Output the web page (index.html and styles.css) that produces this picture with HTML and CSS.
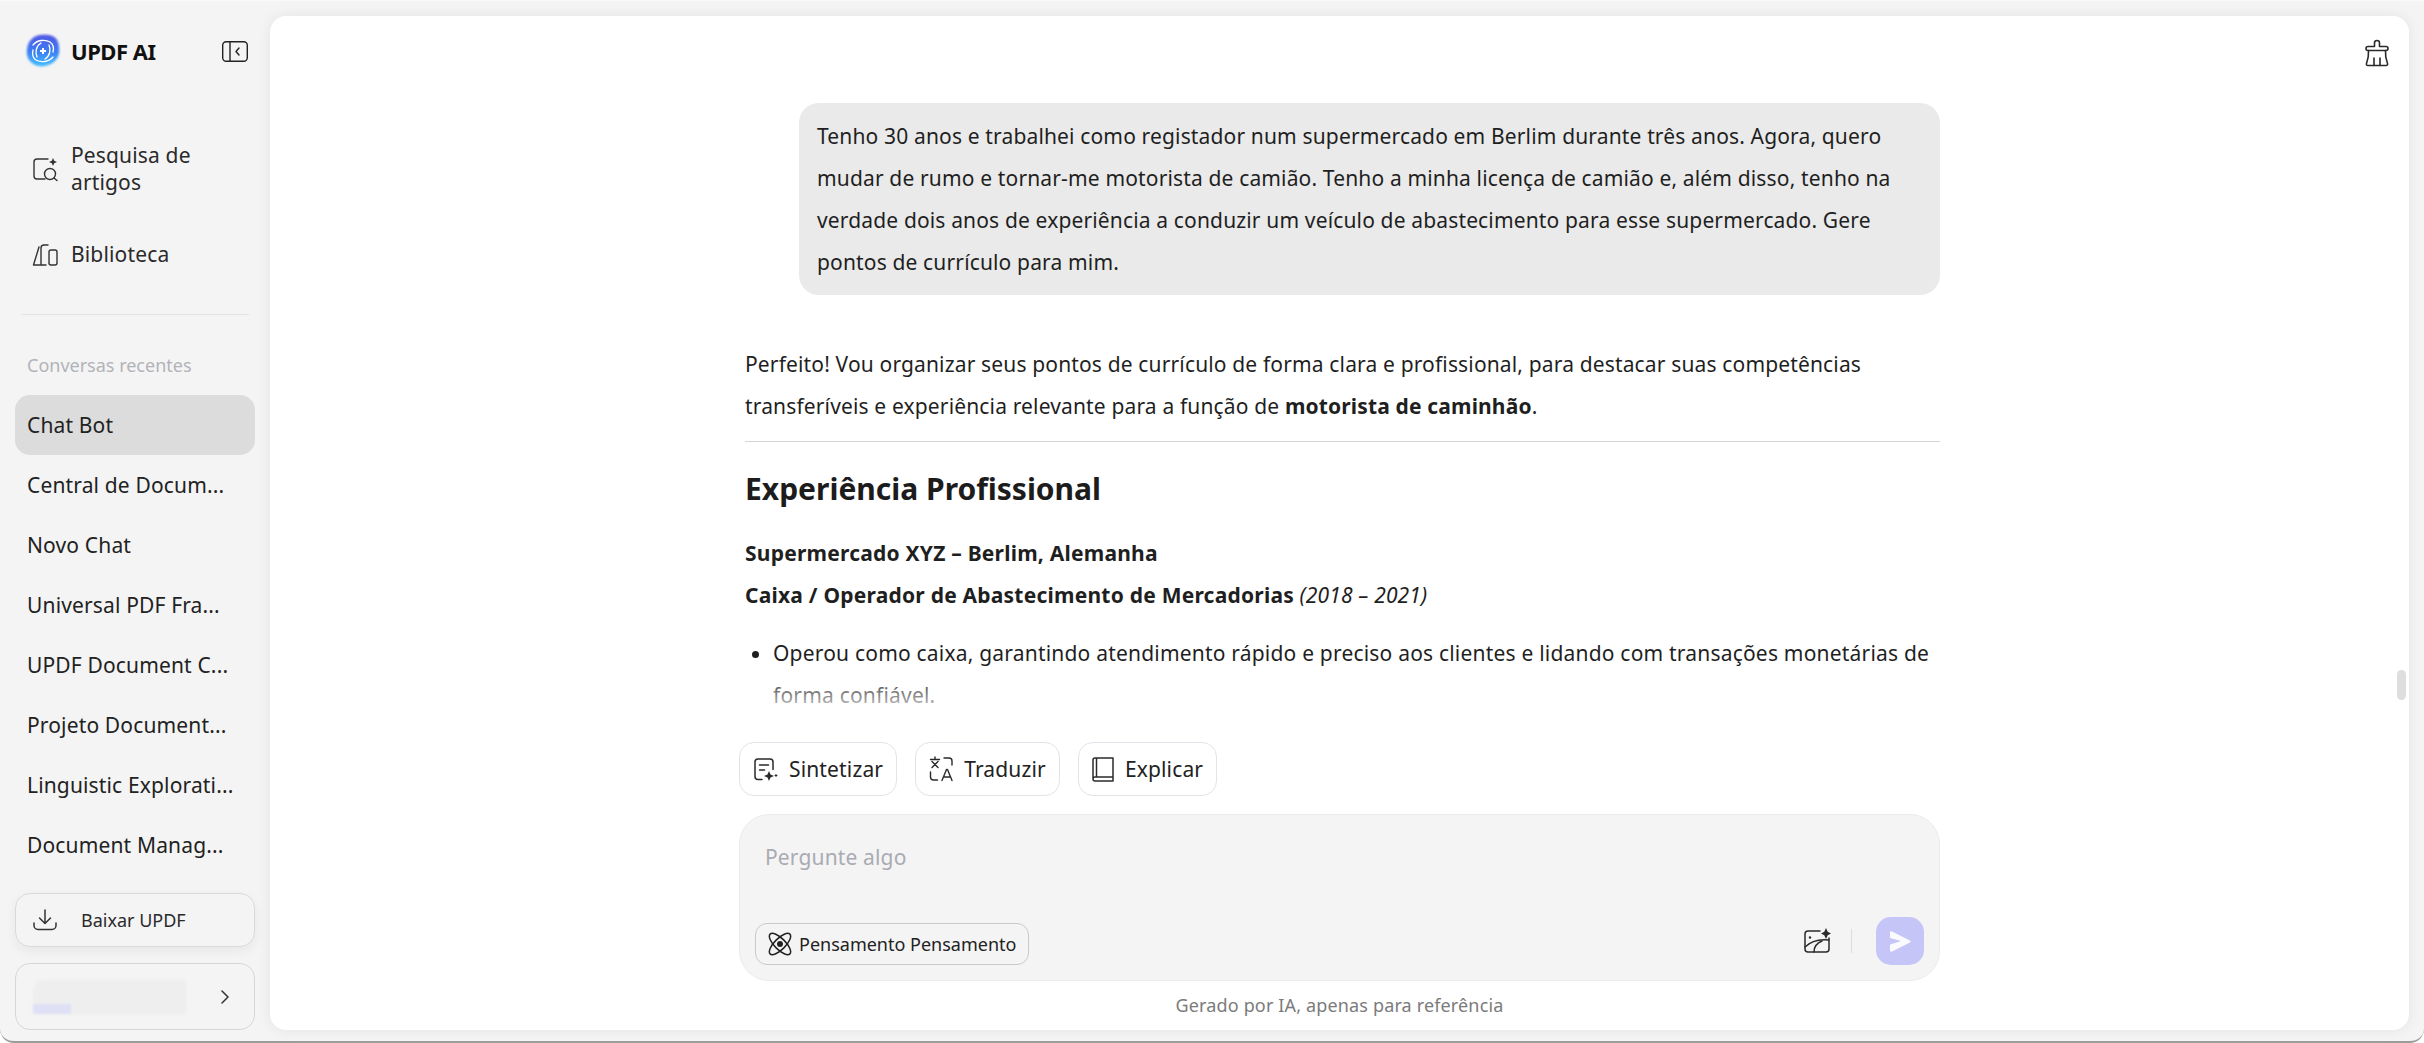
FILE: index.html
```html
<!DOCTYPE html>
<html lang="pt">
<head>
    <meta charset="UTF-8">
    <meta name="viewport" content="width=device-width, initial-scale=1.0">
    <title>UPDF AI</title>
    <link rel="stylesheet" href="styles.css">
</head>
<body>
    <div class="window">
        <aside class="sidebar">
            <div class="brand">
                <svg class="logo" width="36" height="36" viewBox="0 0 36 36">
                    <defs>
                        <linearGradient id="logoFill" x1="0.5" y1="0" x2="0.5" y2="1">
                            <stop offset="0" stop-color="#5256e4"/>
                            <stop offset="0.55" stop-color="#3b80f4"/>
                            <stop offset="1" stop-color="#45c0fc"/>
                        </linearGradient>
                        <filter id="logoSoft" x="-20%" y="-20%" width="140%" height="140%">
                            <feGaussianBlur stdDeviation="1.200"/>
                        </filter>
                    </defs>
                    <path d="M15 2c7-1 16 0 18 7s2 14-3 19-14 7-20 4S1 24 2 16 8 3 15 2Z" fill="url(#logoFill)" filter="url(#logoSoft)"/>
                    <g fill="none" stroke="#fff" stroke-width="1.300" stroke-linecap="round">
                        <path d="M8 12c4-5 12-6 17-3 3 2 4 6 3 10"/>
                        <path d="M28 24c-4 5-12 6-17 3-3-2-4-6-3-10"/>
                        <path d="M12 24c-2-5-1-11 4-14"/>
                        <path d="M24 12c2 5 1 11-4 14"/>
                    </g>
                    <path d="M18 15v6M15 18h6" stroke="#fff" stroke-width="2"/>
                </svg>
                <span class="brand-name">UPDF AI</span>
                <svg class="collapse" width="26" height="21" viewBox="0 0 26 21" fill="none" stroke="#222" stroke-width="1.400">
                    <rect x="0.700" y="0.700" width="24.600" height="19.600" rx="3.500"/>
                    <path d="M8 1v19"/>
                    <path d="M17 7l-3 3.500 3 3.500" stroke-linecap="round" stroke-linejoin="round"/>
                </svg>
            </div>

            <nav class="nav">
                <div class="nav-item">
                    <svg width="26" height="26" viewBox="0 0 26 26" fill="none" stroke="#333" stroke-width="1.400" stroke-linecap="round">
                        <path d="M16 3H5a3 3 0 0 0-3 3v14a3 3 0 0 0 3 3h8"/>
                        <circle cx="18" cy="18" r="5.500"/>
                        <path d="M22 22l3 2.500"/>
                        <path d="M21 2l1.200 2.800L25 6l-2.800 1.200L21 10l-1.200-2.800L17 6l2.800-1.200z" fill="#333" stroke="none"/>
                    </svg>
                    <span>Pesquisa de artigos</span>
                </div>
                <div class="nav-item">
                    <svg width="26" height="24" viewBox="0 0 26 24" fill="none" stroke="#333" stroke-width="1.400" stroke-linejoin="round" stroke-linecap="round">
                        <path d="M7 4L1.500 22H8"/>
                        <path d="M9 22V5a3 3 0 0 1 3-3h4"/>
                        <rect x="17" y="7" width="8" height="15" rx="2"/>
                        <path d="M9 22h5"/>
                    </svg>
                    <span>Biblioteca</span>
                </div>
            </nav>

            <div class="side-rule"></div>
            <div class="side-label">Conversas recentes</div>

            <ul class="chat-list">
                <li class="chat-row active">Chat Bot</li>
                <li class="chat-row">Central de Docum...</li>
                <li class="chat-row">Novo Chat</li>
                <li class="chat-row">Universal PDF Fra...</li>
                <li class="chat-row">UPDF Document C...</li>
                <li class="chat-row">Projeto Document...</li>
                <li class="chat-row">Linguistic Explorati...</li>
                <li class="chat-row">Document Manag...</li>
            </ul>

            <div class="download">
                <svg width="24" height="22" viewBox="0 0 24 22" fill="none" stroke="#333" stroke-width="1.500" stroke-linecap="round" stroke-linejoin="round">
                    <path d="M12 1v13M6.500 9l5.500 5.500L17.500 9"/>
                    <path d="M1 14v2.500a4 4 0 0 0 4 4h14a4 4 0 0 0 4-4V14"/>
                </svg>
                <span>Baixar UPDF</span>
            </div>

            <div class="account">
                <div class="account-blur">
                    <div class="blur-top"></div>
                    <div class="blur-bottom">
                        <div class="blur-tint"></div>
                        <div class="blur-rest"></div>
                    </div>
                </div>
                <svg width="10" height="14" viewBox="0 0 10 14" fill="none" stroke="#333" stroke-width="1.500" stroke-linecap="round" stroke-linejoin="round">
                    <path d="M2 1l6 6-6 6"/>
                </svg>
            </div>
        </aside>

        <main class="panel">
            <svg class="clear" width="26" height="28" viewBox="0 0 26 28" fill="none" stroke="#2a2a2a" stroke-width="1.600" stroke-linejoin="round" stroke-linecap="round">
                <path d="M10.500 7.500V4a2.500 2.500 0 0 1 5 0v3.500H22a2 2 0 0 1 0 4H4a2 2 0 0 1 0-4z"/>
                <path d="M4.500 11.500c.3 5-.6 9.500-2 13 -.4 1 .2 2 1.300 2h18.400c1.100 0 1.700-1 1.300-2-1.400-3.500-2.300-8-2-13"/>
                <path d="M10 19v7.500M16 19v7.500"/>
            </svg>

            <div class="chat">
                <div class="thread">
                    <div class="bubble">Tenho 30 anos e trabalhei como registador num supermercado em Berlim durante três anos. Agora, quero<br>mudar de rumo e tornar-me motorista de camião. Tenho a minha licença de camião e, além disso, tenho na<br>verdade dois anos de experiência a conduzir um veículo de abastecimento para esse supermercado. Gere<br>pontos de currículo para mim.</div>

                    <p class="answer">Perfeito! Vou organizar seus pontos de currículo de forma clara e profissional, para destacar suas competências<br>transferíveis e experiência relevante para a função de <strong>motorista de caminhão</strong>.</p>
                    <hr class="answer-rule">
                    <h2>Experiência Profissional</h2>
                    <p class="job"><strong>Supermercado XYZ – Berlim, Alemanha</strong><br><strong>Caixa / Operador de Abastecimento de Mercadorias</strong> <em>(2018 – 2021)</em></p>
                    <ul class="duties">
                        <li>Operou como caixa, garantindo atendimento rápido e preciso aos clientes e lidando com transações monetárias de<br>forma confiável.</li>
                    </ul>
                </div>
                <div class="chat-fade"></div>
            </div>

            <div class="composer-wrap">
                <div class="shortcuts">
                    <div class="shortcut">
                        <svg width="25" height="25" viewBox="0 0 25 25" fill="none" stroke="#2a2a2a" stroke-width="1.500" stroke-linecap="round">
                            <path d="M9 22.500H5a3 3 0 0 1-3-3V5a3 3 0 0 1 3-3h12a3 3 0 0 1 3 3v7.500"/>
                            <path d="M6.500 8h9M6.500 13h5"/>
                            <path d="M16 14l1.500 3.500L21 19l-3.500 1.500L16 24l-1.500-3.500L11 19l3.500-1.500z" fill="#2a2a2a" stroke="none"/>
                            <path d="M23 17.500v2M22 18.500h2" stroke-width="1"/>
                        </svg>
                        <span>Sintetizar</span>
                    </div>
                    <div class="shortcut">
                        <svg width="24" height="26" viewBox="0 0 24 26" fill="none" stroke="#2a2a2a" stroke-width="1.400" stroke-linecap="round" stroke-linejoin="round">
                            <path d="M6 1v2M1.500 3.500h9M3 5.500l6 6M9 5.500l-6 6"/>
                            <path d="M15 2h5a3 3 0 0 1 3 3v4"/>
                            <path d="M1.500 16v5a3 3 0 0 0 3 3h4"/>
                            <path d="M13 24.500l4.500-11h1l4.500 11M14.500 21h7"/>
                        </svg>
                        <span>Traduzir</span>
                    </div>
                    <div class="shortcut">
                        <svg width="22" height="25" viewBox="0 0 22 25" fill="none" stroke="#2a2a2a" stroke-width="1.500" stroke-linejoin="round">
                            <path d="M1 21V3a2 2 0 0 1 2-2h18v19H3a2 2 0 0 0-2 2 2 2 0 0 0 2 2h18v-4"/>
                            <path d="M4.500 1v19"/>
                        </svg>
                        <span>Explicar</span>
                    </div>
                </div>

                <div class="composer">
                    <div class="placeholder">Pergunte algo</div>
                    <div class="composer-bar">
                        <div class="think">
                            <svg width="24" height="24" viewBox="0 0 24 24" fill="none" stroke="#222" stroke-width="1.500">
                                <circle cx="12" cy="12" r="3" fill="#222" stroke="none"/>
                                <ellipse cx="12" cy="12" rx="14" ry="5.500" transform="rotate(45 12 12)"/>
                                <ellipse cx="12" cy="12" rx="14" ry="5.500" transform="rotate(-45 12 12)"/>
                            </svg>
                            <span>Pensamento Pensamento</span>
                        </div>
                        <div class="composer-tools">
                            <svg width="28" height="26" viewBox="0 0 28 26" fill="none" stroke="#2a2a2a" stroke-width="1.500" stroke-linecap="round">
                                <path d="M17 3H5a3 3 0 0 0-3 3v15a3 3 0 0 0 3 3h18a3 3 0 0 0 3-3v-11"/>
                                <circle cx="7" cy="9.500" r="1.200" fill="#2a2a2a" stroke="none"/>
                                <path d="M2 19c6-6 15-8 24-7"/>
                                <path d="M11 24c0-5 3-9 8-11"/>
                                <path d="M23 0l1.700 3.800 3.300 1.700-3.300 1.700L23 11l-1.700-3.800L18 5.500l3.300-1.700z" fill="#2a2a2a" stroke="none"/>
                            </svg>
                            <div class="tool-rule"></div>
                            <div class="send">
                                <svg width="22" height="21" viewBox="0 0 22 21">
                                    <path d="M1 1.500c0-1 1-1.500 2-1l18 9c.8.400.8 1.500 0 2l-18 9c-1 .5-2 0-2-1v-6l11-3.500L1 7z" fill="#fff" opacity=".9"/>
                                </svg>
                            </div>
                        </div>
                    </div>
                </div>
                <div class="note">Gerado por IA, apenas para referência</div>
            </div>

            <div class="scroll-thumb"></div>
        </main>
    </div>
</body>
</html>
```

FILE: styles.css
```css
* {
    box-sizing: border-box;
}

html, body {
    margin: 0;
    padding: 0;
    height: 100%;
    overflow: hidden;
    background-color: #fff;
}

body {
    font-family: "Noto Sans", Arial, sans-serif;
    font-size: 21px;
    letter-spacing: 0.15px;
    color: #1f1f1f;
}

.window {
    display: flex;
    height: 1043px;
    padding: 15px 15px 11px 0;
    background-color: #f4f4f4;
    border-top: 1px solid #fafafa;
    border-bottom: 2px solid #9c9c9c;
    border-radius: 0 0 14px 14px;
}

/* sidebar */
.sidebar {
    width: 270px;
    flex-shrink: 0;
    display: flex;
    flex-direction: column;
    padding: 0 15px;
}

.brand {
    display: flex;
    align-items: center;
    height: 70px;
    padding: 0 7px 0 10px;
}

.brand-name {
    margin-left: 10px;
    font-size: 22px;
    font-weight: 700;
    color: #111;
    letter-spacing: -0.5px;
}

.collapse {
    margin-left: auto;
}

.nav {
    margin-top: 56px;
}

.nav-item {
    display: flex;
    align-items: center;
    gap: 13px;
    padding: 0 0 0 17px;
    line-height: 27px;
    font-size: 21px;
    color: #2a2a2a;
}

.nav-item + .nav-item {
    margin-top: 45px;
}

.nav-item svg {
    flex-shrink: 0;
}

.side-rule {
    height: 1px;
    margin: 46px 0 0 6px;
    width: 228px;
    background-color: #e2e2e8;
}

.side-label {
    margin: 35px 0 15px 12px;
    font-size: 18px;
    line-height: 30px;
    letter-spacing: 0;
    color: #b2b3b8;
}

.chat-list {
    list-style: none;
    margin: 0;
    padding: 0;
}

.chat-row {
    height: 60px;
    line-height: 60px;
    padding: 0 12px;
    font-size: 21px;
    color: #222;
    border-radius: 15px;
    white-space: nowrap;
}

.chat-row.active {
    background-color: #dcdcdc;
}

.download {
    display: flex;
    align-items: center;
    height: 54px;
    margin-top: 18px;
    padding-left: 17px;
    font-size: 18px;
    letter-spacing: 0;
    color: #2a2a2a;
    border: 1px solid #d9d9d9;
    border-radius: 15px;
    box-shadow: 0 4px 12px rgba(0, 0, 0, 0.06);
}

.download span {
    margin-left: 24px;
}

.account {
    display: flex;
    align-items: center;
    justify-content: space-between;
    height: 67px;
    margin-top: 16px;
    padding: 0 24px 0 17px;
    border: 1px solid #d6d6d6;
    border-radius: 15px;
}

.account-blur {
    width: 153px;
    height: 34px;
    filter: blur(1px);
}

.blur-top {
    height: 24px;
    background-color: #eeeeee;
    border-radius: 10px 0 0 0;
}

.blur-bottom {
    display: flex;
    height: 10px;
}

.blur-tint {
    width: 38px;
    background-color: #dfe0f6;
}

.blur-rest {
    flex: 1;
    background-color: #eeeeee;
}

/* main panel */
.panel {
    position: relative;
    flex: 1;
    min-width: 0;
    display: flex;
    flex-direction: column;
    background-color: #fff;
    border-radius: 16px;
    box-shadow: 0 0 14px rgba(0, 0, 0, 0.07);
}

.clear {
    position: absolute;
    top: 23px;
    right: 19px;
}

.chat {
    position: relative;
    flex: 1;
    min-height: 0;
    overflow: hidden;
}

.thread {
    width: 1195px;
    margin: 87px 0 0 475px;
}

.bubble {
    margin-left: 54px;
    padding: 12px 18px;
    line-height: 42px;
    background-color: #eaeaea;
    border-radius: 20px;
    white-space: nowrap;
}

.answer {
    margin: 48px 0 0;
    line-height: 42px;
    white-space: nowrap;
}

.answer-rule {
    height: 1px;
    margin: 14px 0 0;
    border: none;
    background-color: #d4d4d4;
}

h2 {
    margin: 22px 0 0;
    font-size: 30px;
    line-height: 50px;
    font-weight: 700;
    letter-spacing: 0;
    color: #1c1c1c;
}

.job {
    margin: 18px 0 0;
    line-height: 42px;
    white-space: nowrap;
}

.job strong {
    letter-spacing: 0.22px;
}

.duties {
    margin: 16px 0 0;
    padding: 0 0 0 28px;
    line-height: 42px;
    letter-spacing: 0.2px;
    white-space: nowrap;
}

.chat-fade {
    position: absolute;
    left: 0;
    right: 0;
    bottom: 0;
    height: 70px;
    background: linear-gradient(rgba(255, 255, 255, 0), #fff 70%);
}

.composer-wrap {
    width: 1201px;
    margin: 0 0 0 469px;
}

.shortcuts {
    display: flex;
    gap: 18px;
    margin-bottom: 18px;
}

.shortcut {
    display: flex;
    align-items: center;
    gap: 11px;
    height: 54px;
    padding: 0 13px;
    color: #222;
    background-color: #fff;
    border: 1px solid #e3e3ea;
    border-radius: 15px;
}

.composer {
    height: 167px;
    padding: 24px 15px 15px;
    background-color: #f4f4f4;
    border: 1px solid #ebebeb;
    border-radius: 30px;
}

.placeholder {
    padding-left: 10px;
    line-height: 36px;
    color: #a9abb3;
}

.composer-bar {
    display: flex;
    align-items: flex-end;
    justify-content: space-between;
    margin-top: 42px;
}

.think {
    display: flex;
    align-items: center;
    gap: 7px;
    height: 42px;
    padding: 0 12px;
    font-size: 18px;
    letter-spacing: 0;
    color: #222;
    border: 1px solid #c9c9cf;
    border-radius: 12px;
}

.composer-tools {
    display: flex;
    align-items: center;
}

.tool-rule {
    width: 1px;
    height: 24px;
    margin: 0 24px 0 20px;
    background-color: #dcdce2;
}

.send {
    display: flex;
    align-items: center;
    justify-content: center;
    width: 48px;
    height: 48px;
    background-color: #c5c5f8;
    border-radius: 15px;
}

.note {
    margin: 12px 0 13px;
    line-height: 24px;
    font-size: 18px;
    text-align: center;
    color: #7b7b7b;
}

.scroll-thumb {
    position: absolute;
    top: 654px;
    right: 3px;
    width: 9px;
    height: 30px;
    background-color: #dedede;
    border-radius: 5px;
}
```
